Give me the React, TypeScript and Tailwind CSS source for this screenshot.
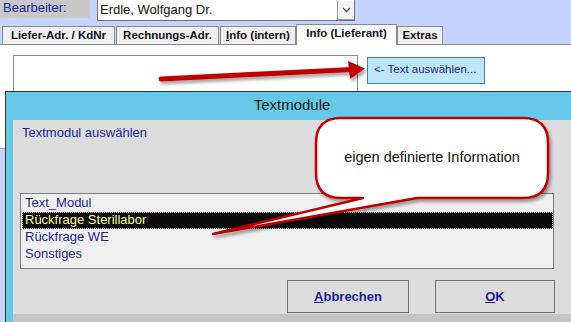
import React from 'react';

const font = { fontFamily: '"Liberation Sans", Arial, sans-serif' };

const items = ['Text_Modul', 'Rückfrage Sterillabor', 'Rückfrage WE', 'Sonstiges'];

const Tab: React.FC<{ w: string; children: React.ReactNode; active?: boolean }> = ({ w, children, active }) => (
  <div
    className={
      active
        ? `${w} h-[21px] -mb-px bg-white border border-b-0 border-[#8a8a8a] flex items-center justify-center text-[11.5px] font-bold text-[#111] relative z-10 pb-[2px]`
        : `${w} h-[18px] bg-[#f0f0f0] border border-b-0 border-[#8a8a8a] flex items-center justify-center text-[11.5px] font-bold text-[#111]`
    }
  >
    {children}
  </div>
);

const Annotations: React.FC = () => (
  <svg className="absolute left-0 top-0 pointer-events-none" width="571" height="322" viewBox="0 0 571 322">
    <defs>
      <filter id="sh" x="-10%" y="-30%" width="130%" height="180%">
        <feDropShadow dx="2" dy="3" stdDeviation="1.6" floodColor="#000" floodOpacity="0.35" />
      </filter>
    </defs>
    <g filter="url(#sh)">
      <line x1="161" y1="79" x2="352" y2="69.5" stroke="#c00000" strokeWidth="5" strokeLinecap="round" />
      <polygon points="348,61 365,68.5 350,79" fill="#c00000" />
    </g>
    <path
      filter="url(#sh)"
      d="M341,118 H523 Q548,118 548,143 V173 Q548,198 523,198 H417 L213,234 L363,198 H341 Q316,198 316,173 V143 Q316,118 341,118 Z"
      fill="#fff"
      stroke="#c00000"
      strokeWidth="2.5"
      strokeLinejoin="round"
    />
  </svg>
);

export default function App() {
  return (
    <div className="relative w-[571px] h-[322px] overflow-hidden bg-white" style={font}>
      {/* header */}
      <div className="h-[45px] bg-[#c4d4fe] border-b border-[#8a8a8a]">
        <div className="flex h-[21px]">
          <div className="w-[90px] h-[18px] bg-[#c8c8c8] text-[13px] leading-[16px] text-[#2323a0] pl-[3px]">Bearbeiter:</div>
          <div className="ml-[7px] w-[258px] h-[21px] bg-white border border-t-0 border-[#6e6e6e] flex items-center justify-between">
            <span className="text-[13px] text-[#111] pl-[2px] pb-[1px]">Erdle, Wolfgang Dr.</span>
            <div className="w-[17px] h-[19px] border-l border-b border-[#9a9a9a] bg-[#f4f4f4] flex items-center justify-center">
              <svg width="9" height="6" viewBox="0 0 9 6">
                <path d="M1 1 L4.5 4.5 L8 1" stroke="#555" strokeWidth="1.3" fill="none" />
              </svg>
            </div>
          </div>
        </div>
        <div className="flex items-end h-[23px] pl-[2px]">
          <Tab w="w-[113px]">Liefer-Adr. / KdNr</Tab>
          <div className="w-px" />
          <Tab w="w-[103px]">Rechnungs-Adr.</Tab>
          <div className="w-px" />
          <Tab w="w-[76px]">
            <span><span className="underline">I</span>nfo (intern)</span>
          </Tab>
          <Tab w="w-[101px]" active>
            Info (Lieferant)
          </Tab>
          <Tab w="w-[46px]">Extras</Tab>
        </div>
      </div>

      {/* info area */}
      <div className="h-[46px] overflow-hidden flex pl-[13px] pt-[10px]">
        <div className="w-[345px] h-[60px] border border-[#8a8a8a] bg-white" />
        <button className="ml-[9px] mt-[2px] w-[118px] h-[27px] bg-[#bee6fa] border border-[#3c7fb1] text-[11.5px] text-[#1e1e8c] text-left pl-[6px] pb-[2px]">
          {'<-  Text auswählen...'}
        </button>
      </div>

      {/* dialog row */}
      <div className="flex">
        <div className="w-[5px] shrink-0 flex flex-col">
          <div className="h-[57px] bg-white" />
          <div className="flex-1 bg-[#c4d4fe] border-t border-[#9aa]" />
        </div>
        <div className="w-[573px] shrink-0 border-l border-t border-[#333] bg-[#64c8e6]">
          <div className="h-[28px] flex items-center justify-center text-[15px] text-[#1a1a1a] pb-[1px]">Textmodule</div>
          <div className="pl-[7px]">
            <div className="h-[194px] bg-[#dcdcdc] pt-[5px]">
              <div className="pl-[9px] text-[13px] text-[#1e1e96] leading-[15px]">Textmodul auswählen</div>
              <div className="ml-[7px] mt-[53px] w-[534px] h-[76px] border border-[#7a7a7a] bg-[#f0f0f0] pt-px pl-px">
                {items.map((t, i) => (
                  <div
                    key={t}
                    className={
                      i === 1
                        ? 'h-[17px] w-[531px] bg-[#0a0a0a] border border-dotted border-[#cfcfcf] text-[13px] leading-[14px] text-[#ffff9a] pl-[2px]'
                        : 'h-[17px] text-[13px] leading-[16px] text-[#1e1e96] pl-[3px]'
                    }
                  >
                    {t}
                  </div>
                ))}
              </div>
              <div className="flex mt-[11px] ml-[274px]">
                <button className="w-[122px] h-[33px] border border-[#707070] bg-[#dcdcdc] text-[13px] font-bold text-[#1e1e8c]">
                  <span className="underline">A</span>bbrechen
                </button>
                <button className="ml-[26px] w-[120px] h-[33px] border border-[#707070] bg-[#dcdcdc] text-[13px] font-bold text-[#1e1e8c]">
                  <span className="underline">O</span>K
                </button>
              </div>
            </div>
            <div className="h-[10px] bg-[#c4c4c4]" />
          </div>
        </div>
      </div>

      <Annotations />
      <div className="absolute left-[316px] top-[148px] w-[232px] text-center text-[14.5px] text-[#111] leading-[18px]">
        eigen definierte Information
      </div>
    </div>
  );
}
